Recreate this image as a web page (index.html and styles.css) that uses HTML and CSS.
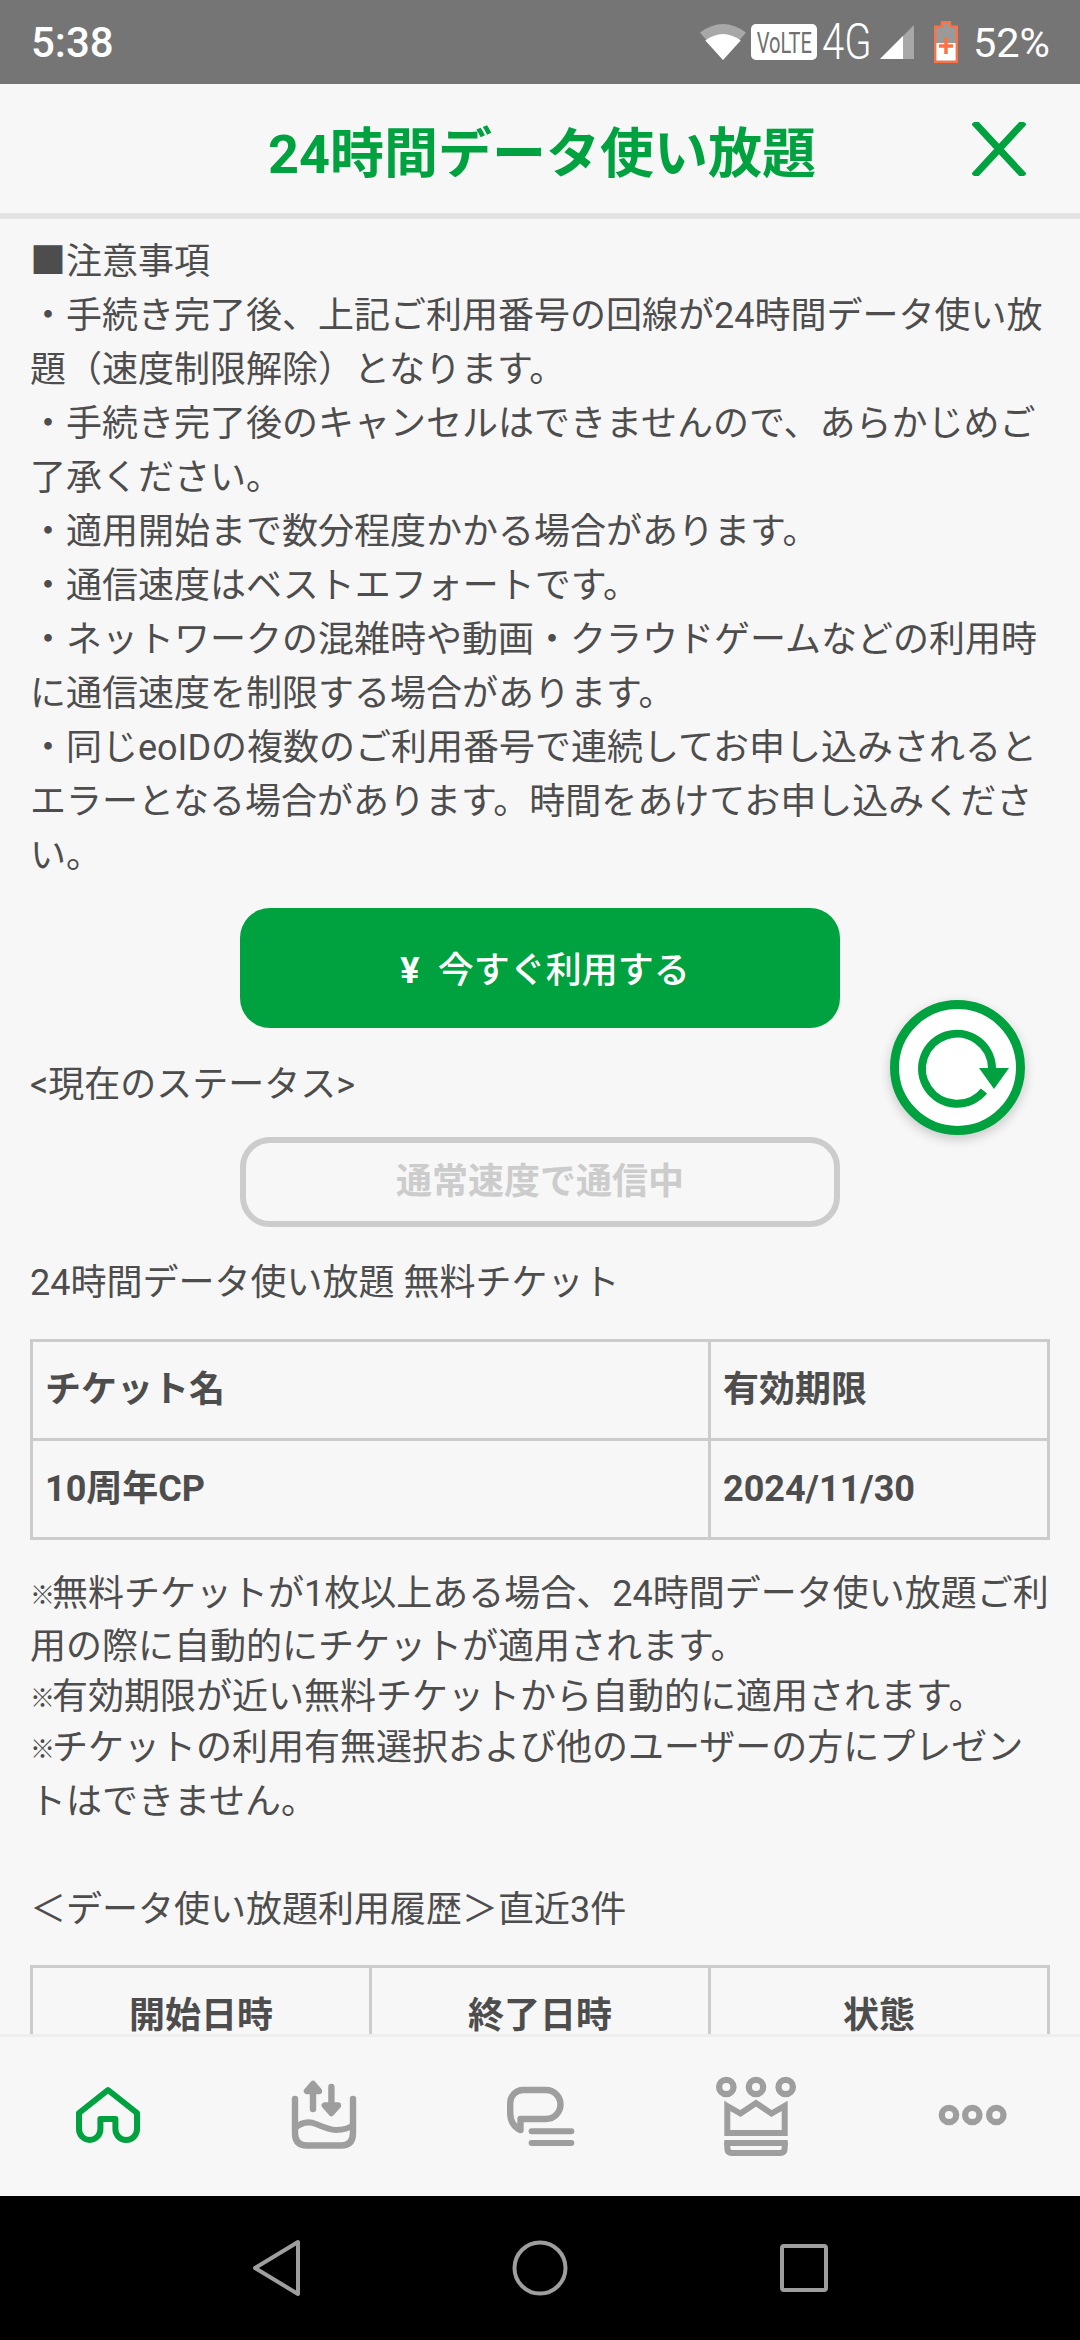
FILE: index.html
```html
<!DOCTYPE html>
<html lang="ja">
<head>
    <meta charset="UTF-8">
    <meta name="viewport" content="width=device-width, initial-scale=1.0">
    <title>24時間データ使い放題</title>
    <link rel="stylesheet" href="styles.css">
</head>
<body>
    <div class="phone">
        <div class="status-bar">
            <span class="clock">5:38</span>
            <div class="status-icons">
                <svg class="wifi" width="46" height="36" viewBox="0 0 46 36">
                    <path d="M0 8.5Q23 -8.5 46 8.5L23 36Z" fill="#a8a8a8"/>
                    <path d="M5.3 16.5Q23 3.5 40.7 16.5L23 36Z" fill="#fff"/>
                </svg>
                <span class="volte"><span>VoLTE</span></span>
                <span class="net">4G</span>
                <svg class="signal" width="34" height="34" viewBox="0 0 34 34">
                    <path d="M0 34L34 0V34Z" fill="#a8a8a8"/>
                    <path d="M0 34L23 11V34Z" fill="#fff"/>
                </svg>
                <svg class="battery" width="24" height="42" viewBox="0 0 24 42">
                    <path d="M8 1.2h8v4.5h6.8v35H1.2V5.7H8Z" fill="#9a9a9a" stroke="#ff7043" stroke-width="2.4"/>
                    <rect x="2.4" y="22" width="19.2" height="17.5" fill="#fff"/>
                    <path d="M12 17v16M5 25h14" stroke="#ff7043" stroke-width="3.5"/>
                </svg>
                <span class="percent">52%</span>
            </div>
        </div>

        <div class="header">
            <span></span>
            <h1>24時間データ使い放題</h1>
            <svg class="close" width="54" height="54" viewBox="0 0 54 54">
                <path d="M2 0L27 27M52 0L27 27M2 54L27 27M52 54L27 27" stroke="#00a23f" stroke-width="7"/>
            </svg>
        </div>

        <div class="content">
            <p>■注意事項<br>
            ・手続き完了後、上記ご利用番号の回線が24時間データ使い放題（速度制限解除）となります。<br>
            ・手続き完了後のキャンセルはできませんので、あらかじめご了承ください。<br>
            ・適用開始まで数分程度かかる場合があります。<br>
            ・通信速度はベストエフォートです。<br>
            ・ネットワークの混雑時や動画・クラウドゲームなどの利用時に通信速度を制限する場合があります。<br>
            ・同じeoIDの複数のご利用番号で連続してお申し込みされるとエラーとなる場合があります。時間をあけてお申し込みください。</p>

            <button class="btn-use"><span class="yen">¥</span>今すぐ利用する</button>

            <p class="status-label">&lt;現在のステータス&gt;</p>
            <div class="btn-status">通常速度で通信中</div>

            <p class="ticket-label">24時間データ使い放題 無料チケット</p>
            <table class="ticket-table">
                <tr><th class="col-name">チケット名</th><th>有効期限</th></tr>
                <tr><th>10周年CP</th><th>2024/11/30</th></tr>
            </table>

            <p class="note note-first"><span class="kome">※</span>無料チケットが1枚以上ある場合、24時間データ使い放題ご利用の際に自動的にチケットが適用されます。</p>
            <p class="note note-second"><span class="kome">※</span>有効期限が近い無料チケットから自動的に適用されます。</p>
            <p class="note"><span class="kome">※</span>チケットの利用有無選択および他のユーザーの方にプレゼントはできません。</p>

            <p class="history-label">＜データ使い放題利用履歴＞直近3件</p>
            <table class="history-table">
                <tr><th>開始日時</th><th>終了日時</th><th>状態</th></tr>
            </table>

            <div class="reload">
                <svg width="117" height="117" viewBox="0 0 117 117">
                    <path d="M93 59A35 35 0 1 0 85 82" fill="none" stroke="#00a23f" stroke-width="8"/>
                    <path d="M80 59H110L95 80Z" fill="#00a23f"/>
                </svg>
            </div>
        </div>

        <div class="tab-bar">
            <svg viewBox="0 0 100 100">
                <path d="M50 24L21 47V63A10.7 11 0 0 0 42.4 63V53H57.4V63A10.8 11 0 0 0 79 63V47Z" fill="none" stroke="#00a23f" stroke-width="6" stroke-linejoin="round"/>
            </svg>
            <svg viewBox="0 0 100 100">
                <g fill="none" stroke="#9e9e9e" stroke-width="6.4" stroke-linecap="round" stroke-linejoin="round">
                    <path d="M21 33V67Q21 79.5 33 79.5H67Q79 79.5 79 67V33"/>
                    <path d="M21 62C28 56 35 55 42 58S56 64 62 64S74 63 79 59" stroke-width="6"/>
                    <path d="M39 20V43M57.4 21V45"/>
                    <path d="M39 18L33 25H45ZM57.4 47L50.8 39.5H64Z" fill="#9e9e9e"/>
                </g>
            </svg>
            <svg viewBox="0 0 100 100">
                <path d="M33 24H56A14.5 14.5 0 0 1 56 53H30.5V64Q20.2 59 20.2 47V37A13 13 0 0 1 33 24Z" fill="none" stroke="#9e9e9e" stroke-width="6.4" stroke-linejoin="round"/>
                <rect x="38.6" y="62.3" width="45.7" height="6" rx="3" fill="#9e9e9e"/>
                <rect x="38.6" y="74" width="45.7" height="6" rx="3" fill="#9e9e9e"/>
            </svg>
            <svg viewBox="0 0 100 100">
                <g fill="none" stroke="#9e9e9e" stroke-width="6.3">
                    <circle cx="20.3" cy="21" r="7.2"/>
                    <circle cx="50" cy="21" r="7.2"/>
                    <circle cx="79.7" cy="21" r="7.2"/>
                    <path d="M21.3 40L34.5 47.5L50 37L65.5 47.5L78.7 40V67H21.3Z" stroke-width="6"/>
                    <path d="M21.3 76V82Q21.3 87 26 87H74Q78.7 87 78.7 82V76" stroke-width="6"/>
                </g>
                <rect x="18.3" y="74" width="63.4" height="6" fill="#9e9e9e"/>
            </svg>
            <svg viewBox="0 0 100 100">
                <g fill="none" stroke="#9e9e9e" stroke-width="6.3">
                    <circle cx="27" cy="49" r="7.2"/>
                    <circle cx="50.3" cy="49" r="7.2"/>
                    <circle cx="74.3" cy="49" r="7.2"/>
                </g>
            </svg>
        </div>

        <div class="nav-bar">
            <svg width="60" height="60" viewBox="0 0 60 60">
                <path d="M52 4V56L9 30Z" fill="none" stroke="#9e9e9e" stroke-width="4" stroke-linejoin="round"/>
            </svg>
            <svg width="60" height="60" viewBox="0 0 60 60">
                <circle cx="30" cy="30" r="25.5" fill="none" stroke="#9e9e9e" stroke-width="4"/>
            </svg>
            <svg width="60" height="60" viewBox="0 0 60 60">
                <rect x="8" y="8" width="44" height="44" rx="2" fill="none" stroke="#9e9e9e" stroke-width="4"/>
            </svg>
        </div>
    </div>
</body>
</html>
```

FILE: styles.css
```css
body {
    margin: 0;
    font-family: Roboto, "Noto Sans CJK JP", sans-serif;
    background-color: #f7f7f7;
    color: #4d4d4d;
}
p {
    margin: 0;
}
.phone {
    width: 1080px;
    height: 2340px;
    display: flex;
    flex-direction: column;
    overflow: hidden;
}

/* status bar */
.status-bar {
    height: 84px;
    flex: none;
    box-sizing: border-box;
    background-color: #757575;
    color: white;
    display: flex;
    align-items: center;
    justify-content: space-between;
    padding: 0 30px 0 31px;
}
.clock {
    font-size: 42px;
    font-weight: 500;
}
.status-icons {
    display: flex;
    align-items: center;
}
.volte {
    width: 66px;
    height: 36px;
    margin-left: 5px;
    background: white;
    border-radius: 5px;
    color: #707070;
    display: flex;
    align-items: center;
    justify-content: center;
    overflow: hidden;
}
.volte span {
    font-size: 30px;
    transform: scaleX(0.67);
}
.net {
    width: 49px;
    margin-left: 5px;
    font-size: 50px;
    font-weight: 300;
    line-height: 1;
    transform: scaleX(0.8);
    transform-origin: left center;
}
.signal {
    margin-left: 9px;
}
.battery {
    margin-left: 20px;
}
.percent {
    margin-left: 15px;
    font-size: 41.5px;
}

/* header */
.header {
    height: 129px;
    flex: none;
    border-bottom: 6px solid #e4e4e4;
    display: grid;
    grid-template-columns: 1fr auto 1fr;
    align-items: center;
    padding: 0 54px;
}
.header h1 {
    margin: 0;
    padding: 2px 0 0 4px;
    font-size: 54px;
    font-weight: 700;
    color: #00a23f;
}
.close {
    justify-self: end;
}

/* scrolling content */
.content {
    position: relative;
    flex: 1;
    min-height: 0;
    overflow: hidden;
    padding: 16px 30px 0;
    font-size: 36px;
    line-height: 54px;
}
.btn-use {
    display: block;
    width: 600px;
    height: 120px;
    margin: 25px auto 0;
    padding: 0 0 2px 10px;
    border: none;
    border-radius: 30px;
    background-color: #00a23f;
    color: white;
    font-family: inherit;
    font-size: 36px;
    font-weight: 500;
}
.yen {
    margin-right: 18px;
    font-weight: 700;
}
.status-label {
    margin-top: 30px;
}
.btn-status {
    box-sizing: border-box;
    width: 600px;
    height: 90px;
    margin: 25px auto 0;
    border: 6px solid #cccccc;
    border-radius: 30px;
    color: #cccccc;
    font-weight: 700;
    line-height: 78px;
    text-align: center;
}
.ticket-label {
    margin-top: 29px;
}
table {
    width: 1020px;
    table-layout: fixed;
    border-collapse: collapse;
    border: 3px solid #cccccc;
}
th {
    border: 3px solid #cccccc;
    height: 96px;
    padding: 0 12px;
    font-weight: 700;
    text-align: left;
}
.ticket-table {
    margin-top: 29px;
}
.col-name {
    width: 651px;
}
.note {
    line-height: 54px;
}
.note-first {
    margin-top: 28px;
    line-height: 53px;
}
.note-second {
    line-height: 47px;
}
.kome {
    display: inline-block;
    width: 22px;
    font-size: 25px;
    font-weight: 700;
    line-height: 0;
    vertical-align: 2px;
}
.history-label {
    margin-top: 54px;
}
.history-table {
    margin-top: 28px;
}
.history-table th {
    text-align: center;
}
.reload {
    position: absolute;
    left: 890px;
    top: 781px;
    box-sizing: border-box;
    width: 135px;
    height: 135px;
    border: 9px solid #00a23f;
    border-radius: 50%;
    background: white;
    box-shadow: 0 4px 12px rgba(0,0,0,0.2);
}
.reload svg {
    display: block;
}

/* bottom tabs */
.tab-bar {
    flex: none;
    height: 158px;
    padding-bottom: 1px;
    border-top: 3px solid #eeeeee;
    background-color: #f7f7f7;
    display: grid;
    grid-template-columns: repeat(5, 1fr);
    justify-items: center;
    align-items: center;
    position: relative;
}
.tab-bar svg {
    width: 100px;
    height: 100px;
}

/* android nav */
.nav-bar {
    flex: none;
    height: 144px;
    background-color: black;
    display: flex;
    align-items: center;
    justify-content: center;
    gap: 204px;
}
```
